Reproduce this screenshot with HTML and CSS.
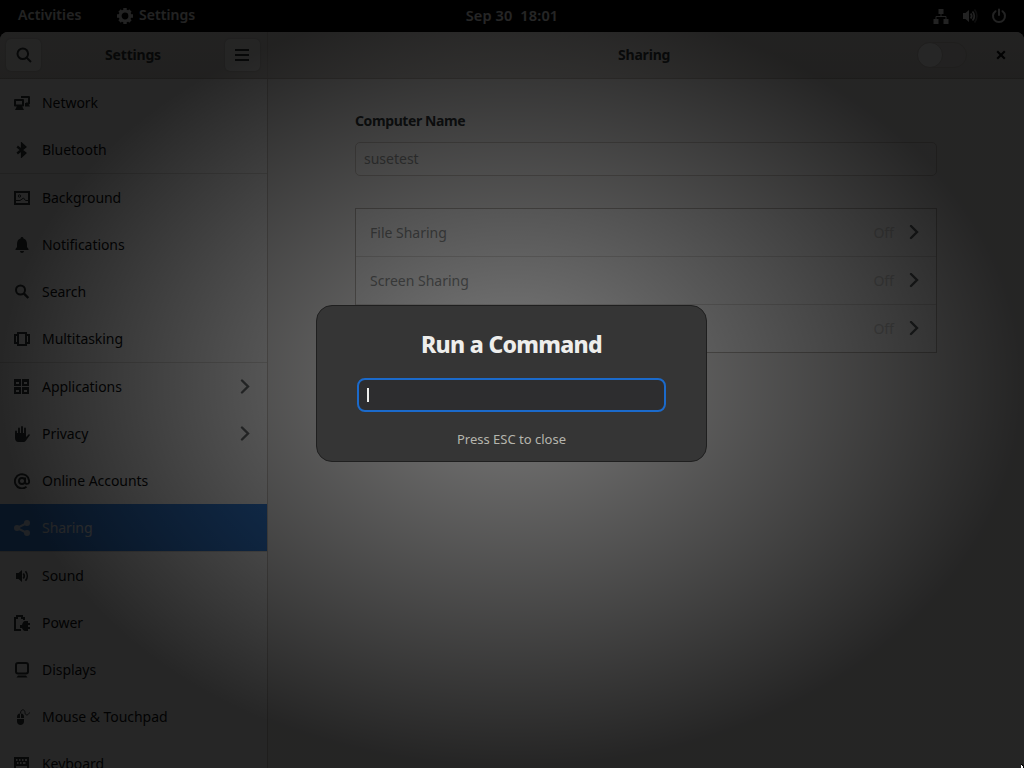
FILE: index.html
```
<!DOCTYPE html>
<html lang="en">
<head>
<meta charset="utf-8">
<title>Settings</title>
<link rel="stylesheet" href="styles.css">
</head>
<body>
<div class="desktop">
  <div class="topbar">
    <div class="tb-left">
      <span class="activities">Activities</span>
      <svg class="gear" viewBox="0 0 16 16"><g fill="currentColor"><path d="M6.300 0h3.400v16H6.300zM0 6.300h16v3.400H0z"/><path d="M6.300 0.300h3.400v15.400H6.300zM.3 6.300h15.400v3.400H.3z" transform="rotate(45 8 8)"/></g><circle cx="8" cy="8" r="4.900" fill="#000" stroke="currentColor" stroke-width="3"/></svg>
      <span class="appname">Settings</span>
    </div>
    <div class="clock">Sep 30&nbsp; 18:01</div>
    <div class="tb-right">
      <svg viewBox="0 0 16 16"><path fill="currentColor" d="M5.500 1h5v5h-5zM.5 11h5v5h-5zM10.500 11h5v5h-5z"/><path fill="none" stroke="currentColor" d="M8 5v3.500M3 12V8.500h10V12"/></svg>
      <svg viewBox="0 0 16 16"><path fill="currentColor" d="M1 5h2.500L7 2v12L3.500 11H1z"/><path fill="none" stroke="currentColor" stroke-width="1.800" d="M8.700 5.500a4 4 0 0 1 0 5M10.500 3.500a6.500 6.500 0 0 1 0 9"/><path fill="none" stroke="currentColor" stroke-width="1.600" opacity=".4" d="M12.500 1.500a10 10 0 0 1 0 13"/></svg>
      <svg viewBox="0 0 16 16"><path fill="none" stroke="currentColor" stroke-width="2" stroke-linecap="round" d="M8 1.500v5.500M4.500 3.200a6 6 0 1 0 7 0"/></svg>
    </div>
  </div>

  <div class="window">
    <div class="headerbar">
      <div class="hb-side">
        <div class="btn"><svg viewBox="0 0 16 16"><circle cx="6.800" cy="6.800" r="5.300" fill="none" stroke="currentColor" stroke-width="2"/><path d="M10.500 10.500l4.500 4.500" stroke="currentColor" stroke-width="2"/></svg></div>
        <div class="title">Settings</div>
        <div class="btn"><svg viewBox="0 0 16 16"><path fill="currentColor" d="M1 2h14v2H1zM1 7h14v2H1zM1 12h14v2H1z"/></svg></div>
      </div>
      <div class="hb-main">
        <div class="title">Sharing</div>
        <div class="switch"><div class="knob"></div></div>
        <svg class="close" viewBox="0 0 16 16"><path d="M4.200 4.200l7.600 7.600M11.800 4.200l-7.600 7.600" stroke="currentColor" stroke-width="2.200"/></svg>
      </div>
    </div>

    <div class="body">
      <div class="sidebar">
        <div class="row"><svg viewBox="0 0 16 16"><path fill="none" stroke="currentColor" stroke-width="2" stroke-linejoin="round" d="M1 5h8v5.500H1zM7 2h8v6.500h-3"/><path fill="currentColor" d="M3 11h5l2 4H1zM11 8h3l2 3.500h-5z"/></svg><span>Network</span></div>
        <div class="row"><svg viewBox="0 0 16 16"><path fill="none" stroke="currentColor" stroke-width="2.300" d="M3.200 4.500l8 6.500L8 14V2l3.200 3-8 6.500"/></svg><span>Bluetooth</span></div>
        <div class="sep"></div>
        <div class="row"><svg viewBox="0 0 16 16"><path fill="none" stroke="currentColor" stroke-width="2" d="M1 2h14v12H1z"/><path fill="none" stroke="currentColor" d="M2 10.500h4l3.500-2.500 2 2.500H14"/><circle cx="5.500" cy="6" r="1.200" fill="none" stroke="currentColor"/></svg><span>Background</span></div>
        <div class="row"><svg viewBox="0 0 16 16"><path fill="currentColor" d="M8 0c1 0 1.500.7 1.500 1.500C12 2.300 13 4.500 13 7v3l1.500 2v1h-13v-1L3 10V7c0-2.500 1-4.700 3.500-5.500C6.500.7 7 0 8 0zM6 14h4c0 1-1 2-2 2s-2-1-2-2z"/></svg><span>Notifications</span></div>
        <div class="row"><svg viewBox="0 0 16 16"><circle cx="6.500" cy="6" r="4.500" fill="none" stroke="currentColor" stroke-width="2"/><path d="M9.800 9.300L14.300 14" stroke="currentColor" stroke-width="2.400"/></svg><span>Search</span></div>
        <div class="row"><svg viewBox="0 0 16 16"><path fill="none" stroke="currentColor" stroke-width="2" d="M4 2h8v12H4zM4 4H1v8h3M12 4h3v8h-3"/></svg><span>Multitasking</span></div>
        <div class="sep"></div>
        <div class="row"><svg viewBox="0 0 16 16"><path fill="currentColor" fill-rule="evenodd" d="M0 0h7v7H0zM2 3v2h3V3zM8 0h7v7H8zM10 3v2h3V3zM0 8h7v7H0zM2 11v2h3v-2zM8 8h7v7H8zM10 11v2h3v-2z"/></svg><span>Applications</span><svg class="chev" viewBox="0 0 16 16"><path fill="none" stroke="currentColor" stroke-width="2.400" stroke-linecap="round" d="M5 1.500l6 6-6 6"/></svg></div>
        <div class="row"><svg viewBox="0 0 16 16"><path fill="none" stroke="currentColor" stroke-width="1.900" stroke-linecap="round" d="M2 5.500V10M5 2.500V10M8 1v9M11 2.500V10"/><path fill="currentColor" d="M1 7h11v4l3-3 1 1-4 5.500c-.8 1-1.500 1.500-3 1.500H4.500C2 16 1 14 1 12z"/></svg><span>Privacy</span><svg class="chev" viewBox="0 0 16 16"><path fill="none" stroke="currentColor" stroke-width="2.400" stroke-linecap="round" d="M5 1.500l6 6-6 6"/></svg></div>
        <div class="row"><svg viewBox="0 0 16 16"><path fill="none" stroke="currentColor" stroke-width="1.900" d="M12.500 13.800A7.100 7.100 0 1 1 15.100 8v1c0 2.500-4 2.500-4 0V4.500"/><circle cx="8" cy="8" r="3" fill="none" stroke="currentColor" stroke-width="1.900"/></svg><span>Online Accounts</span></div>
        <div class="row selected"><svg viewBox="0 0 16 16"><path fill="none" stroke="currentColor" stroke-width="2" d="M13 3L3 8l10 5"/><circle cx="3" cy="8" r="3" fill="currentColor"/><circle cx="13" cy="3" r="3" fill="currentColor"/><circle cx="13" cy="13" r="3" fill="currentColor"/></svg><span>Sharing</span></div>
        <div class="sep"></div>
        <div class="row"><svg viewBox="0 0 16 16"><path fill="currentColor" d="M2 5h2.500L8 2v12l-3.500-3H2z"/><path fill="none" stroke="currentColor" stroke-width="1.700" d="M9.300 5.500a4 4 0 0 1 0 5M11.500 3.200a7.500 7.500 0 0 1 0 9.600"/></svg><span>Sound</span></div>
        <div class="row"><svg viewBox="0 0 16 16"><path fill="none" stroke="currentColor" stroke-width="2" d="M7 15H1V3h2V1h5v2h2v2"/><path fill="currentColor" d="M11 6h3v2h2v2h-2v2h2v2h-2v2h-3c-1.500 0-2.500-1.500-3-3H6v-3h2c.5-2 1.500-4 3-4z"/></svg><span>Power</span></div>
        <div class="row"><svg viewBox="0 0 16 16"><rect x="2" y="1" width="12" height="10.500" rx="2" fill="none" stroke="currentColor" stroke-width="2"/><path fill="currentColor" d="M4 13.500h8l1.500 2h-11z"/></svg><span>Displays</span></div>
        <div class="row"><svg viewBox="0 0 16 16"><path fill="currentColor" d="M3 8c0-2 1-3.500 3-3.500V9H3zM7 4.500c2 0 3 1.500 3 3.500v1H7zM3 10h7v2.500c0 2-1.500 3.500-3.500 3.500S3 14.500 3 12.500z"/><path fill="none" stroke="currentColor" d="M6.500 4.500C6.500-.5 11 0 11 3.500c0 3 3 3.500 4.500 0"/></svg><span>Mouse &amp; Touchpad</span></div>
        <div class="row"><svg viewBox="0 0 16 16"><path fill="currentColor" fill-rule="evenodd" d="M0 1h15v13H0zM2 3v2h1.500V3zm3 0v2h1.500V3zm3 0v2h1.500V3zm3 0v2h2V3zM3 6v2h1.500V6zm3 0v2h1.500V6zm3 0v2h2.500V6zM2 10v2h11v-2z"/></svg><span>Keyboard</span></div>
      </div>
      <div class="content">
        <div class="label">Computer Name</div>
        <div class="entry">susetest</div>
        <div class="list">
          <div class="item"><span class="name">File Sharing</span><span class="state">Off</span><svg viewBox="0 0 16 16"><path fill="none" stroke="currentColor" stroke-width="2.400" stroke-linecap="round" d="M5 1l6 6-6 6"/></svg></div>
          <div class="item"><span class="name">Screen Sharing</span><span class="state">Off</span><svg viewBox="0 0 16 16"><path fill="none" stroke="currentColor" stroke-width="2.400" stroke-linecap="round" d="M5 1l6 6-6 6"/></svg></div>
          <div class="item"><span class="name"></span><span class="state">Off</span><svg viewBox="0 0 16 16"><path fill="none" stroke="currentColor" stroke-width="2.400" stroke-linecap="round" d="M5 1l6 6-6 6"/></svg></div>
        </div>
      </div>
    </div>
  </div>

  <div class="vignette">
    <div class="dialog">
      <div class="dlg-title">Run a Command</div>
      <div class="dlg-entry"><div class="caret"></div></div>
      <div class="dlg-hint">Press ESC to close</div>
    </div>
  </div>
  <svg class="pointer" viewBox="0 0 3 4"><path fill="#000" d="M0 0h1l2 2v2H0z"/><path fill="#fff" d="M0 1h1v1h1v2H0z"/></svg>
</div>
</body>
</html>
```
FILE: styles.css
```
* { box-sizing: border-box; }
body { margin: 0; background: #000; font-family: "Noto Sans", "Open Sans", sans-serif; font-size: 14px; color: #0c0e0f; }
svg { display: block; width: 16px; height: 16px; flex: none; }
.desktop { position: relative; width: 1024px; height: 768px; overflow: hidden; display: flex; flex-direction: column; }

.topbar { height: 32px; display: grid; grid-template-columns: 1fr auto 1fr; align-items: center; background: #000; color: #e6e6e6; font-weight: 600; white-space: nowrap; }
.topbar span, .clock { line-height: 20px; padding-bottom: 2px; }
.tb-left { display: flex; align-items: center; padding-left: 18px; }
.activities { width: 99px; letter-spacing: 0.1px; }
.appname { margin-left: 6px; letter-spacing: 0.05px; }
.clock { font-size: 14.5px; letter-spacing: 0.15px; }
.tb-right { display: flex; justify-content: flex-end; gap: 13px; padding-right: 17px; }

.window { flex: 1; min-height: 0; display: flex; flex-direction: column; border-radius: 8px 8px 0 0; overflow: hidden; background: #f6f5f4; }
.headerbar { height: 47px; flex: none; display: flex; background: linear-gradient(#e6e3e0, #dad6d2); border-bottom: 1px solid #bfb8b1; }
.hb-side { width: 268px; padding: 0 7px 0 6px; display: flex; align-items: center; justify-content: space-between; border-right: 1px solid #cdc7c2; }
.btn { width: 35px; height: 32px; border-radius: 5px; background: #f6f5f4; box-shadow: 0 0 2px rgba(0,0,0,.25); display: flex; align-items: center; justify-content: center; color: #2e3436; }
.title { font-weight: 700; font-size: 14px; letter-spacing: -0.2px; padding-bottom: 2px; color: #2e3436; }
.hb-main { flex: 1; display: grid; grid-template-columns: 649px 50px 1fr; align-items: center; }
.hb-main .title { padding-left: 350px; }
.switch { width: 50px; height: 26px; border-radius: 13px; border: 1px solid #cdc7c2; background: #e1dedb; }
.knob { width: 26px; height: 26px; margin: -1px 0 0 -1px; border-radius: 50%; background: #fff; border: 1px solid #cdc7c2; }
.close { justify-self: end; margin-right: 15px; }

.body { flex: 1; min-height: 0; display: flex; }
.sidebar { width: 268px; flex: none; background: #fff; border-right: 1px solid #cdc7c2; overflow: hidden; }
.row { height: 47px; display: flex; align-items: center; padding: 0 14px; }
.row span { margin-left: 12px; flex: 1; white-space: nowrap; letter-spacing: -0.05px; }
.row svg { color: #2e3436; }
.row .chev { color: #6c7072; }
.sep { height: 1px; background: #dfddda; }
.row.selected { background: #3584e4; color: #e0e6ec; }
.row.selected svg { color: #d6e4f6; }

.content { flex: 1; padding: 31px 87px 0; }
.label { font-weight: 700; line-height: 21px; letter-spacing: -0.4px; color: #2e3436; }
.entry { margin-top: 11px; height: 34px; border: 1px solid #cdc7c2; border-radius: 5px; background: #faf9f8; padding: 0 8px; line-height: 32px; color: #929595; }
.list { margin-top: 32px; border: 1px solid #b8b3ae; background: #fcfcfc; }
.item { height: 48px; display: flex; align-items: center; padding: 0 14px; border-bottom: 1px solid #dcdad8; }
.item:last-child { height: 47px; border-bottom: 0; }
.item svg { color: #5c6162; }
.name { flex: 1; color: #929595; }
.state { color: #cfcfce; margin-right: 12px; }

/* Dimming layer: brightness falls from 50% in the centre to 15% at the edges */
.vignette { position: absolute; inset: 0; display: flex; align-items: flex-start; justify-content: center; padding: 305px 1px 0 0; background: radial-gradient(ellipse closest-side at 512px 384px, rgba(0,0,0,.5), rgba(0,0,0,.85)); }
.dialog { width: 391px; height: 157px; border-radius: 16px; border: 1px solid #1f1f1f; background: #353535; display: flex; flex-direction: column; align-items: center; }
.dlg-title { margin-top: 22px; font-size: 23px; line-height: 32px; font-weight: 800; letter-spacing: -0.7px; color: #eeeeec; }
.dlg-entry { margin-top: 18px; width: 309px; height: 34px; border: 2px solid #1b6acb; border-radius: 8px; background: #2d2d2f; padding: 8px; display: flex; }
.caret { width: 2px; height: 14px; background: #eeeeec; }
.dlg-hint { margin-top: 17px; font-size: 13px; line-height: 20px; color: #b5b5ae; }
.pointer { position: absolute; left: 1021px; top: 764px; width: 3px; height: 4px; }
```
